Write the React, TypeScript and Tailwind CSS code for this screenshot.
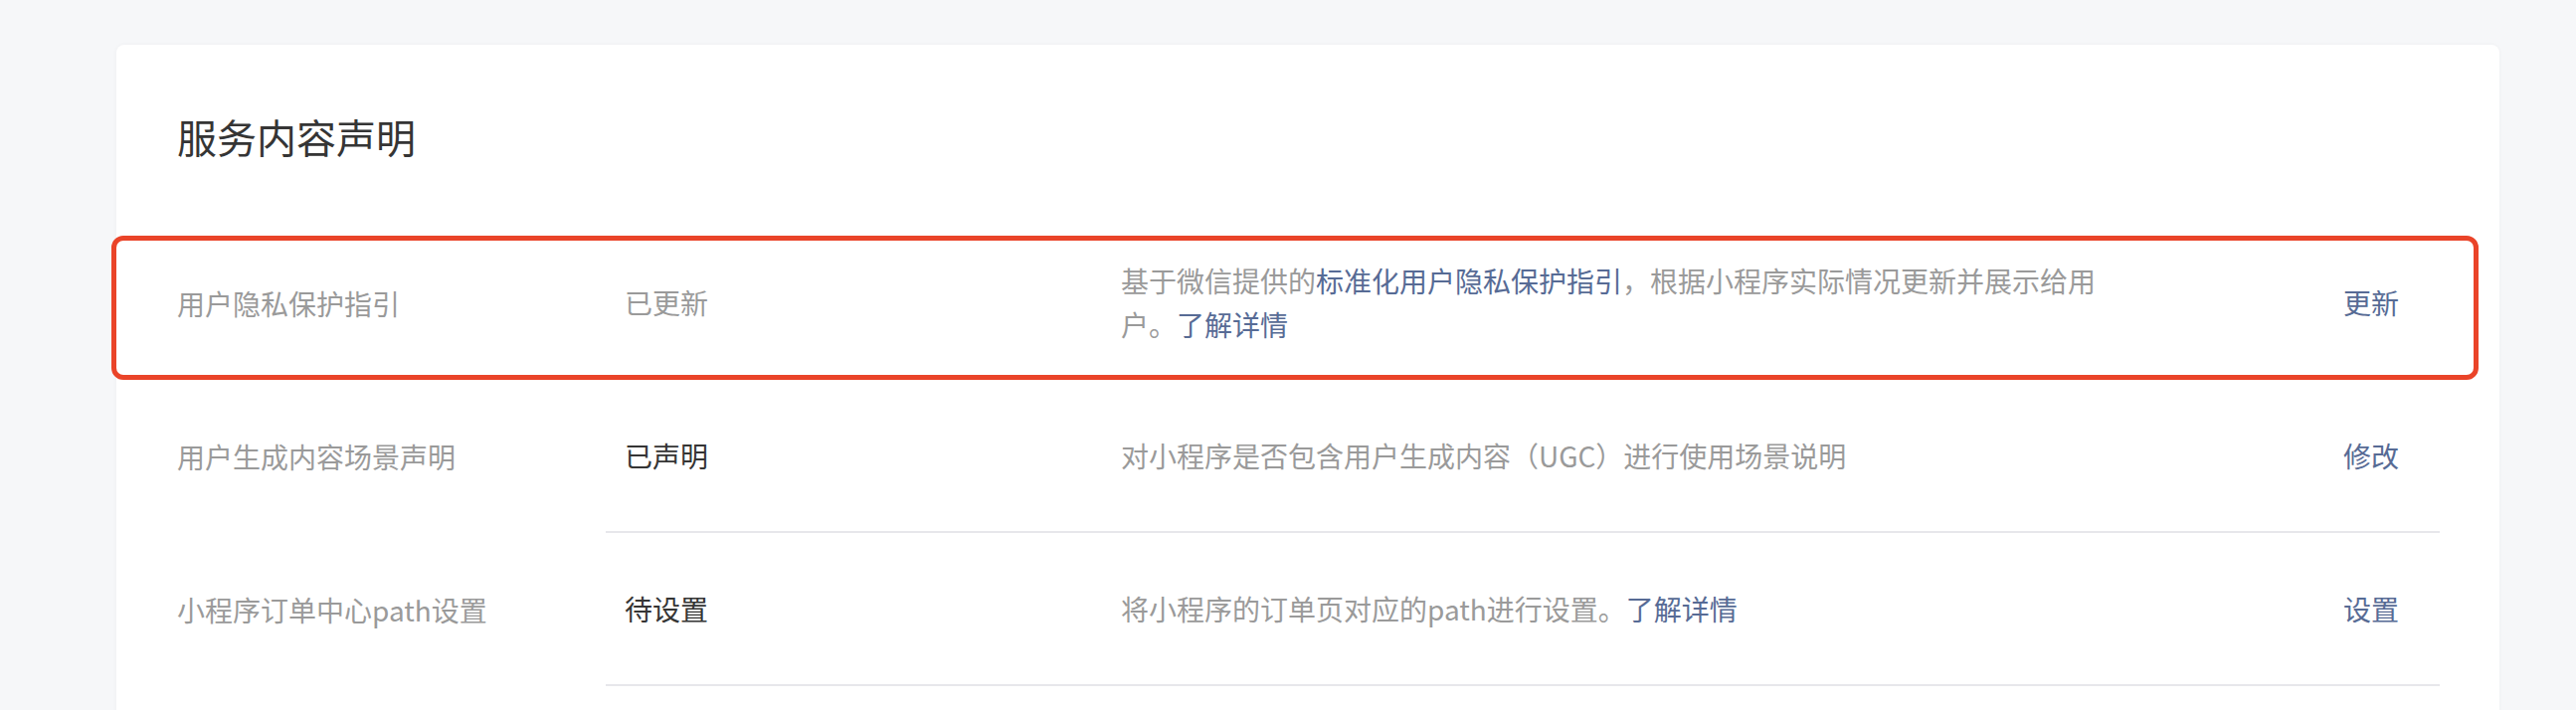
import React from "react";

type Row = {
  label: string;
  status: string;
  statusDone?: boolean;
  desc: React.ReactNode;
  action: string;
  highlight?: boolean;
};

const Link = ({ children }: { children: React.ReactNode }) => (
  <a className="text-[#576b95] cursor-pointer">{children}</a>
);

const rows: Row[] = [
  {
    label: "用户隐私保护指引",
    status: "已更新",
    statusDone: true,
    desc: (
      <>
        基于微信提供的<Link>标准化用户隐私保护指引</Link>，根据小程序实际情况更新并展示给用户。
        <Link>了解详情</Link>
      </>
    ),
    action: "更新",
    highlight: true,
  },
  {
    label: "用户生成内容场景声明",
    status: "已声明",
    desc: "对小程序是否包含用户生成内容（UGC）进行使用场景说明",
    action: "修改",
  },
  {
    label: "小程序订单中心path设置",
    status: "待设置",
    desc: (
      <>
        将小程序的订单页对应的path进行设置。<Link>了解详情</Link>
      </>
    ),
    action: "设置",
  },
];

function DeclRow({ row }: { row: Row }) {
  return (
    <div className="relative flex h-[154px]">
      {/* label column sits outside the divider */}
      <div className="w-[431px] shrink-0 flex items-center text-[#9a9a9a]">
        {row.label}
      </div>
      <div className="flex-1 flex items-center border-b-2 border-[#e7e7eb] pl-[19px]">
        <div
          className={
            row.statusDone
              ? "w-[499px] shrink-0 text-[#9a9a9a]"
              : "w-[499px] shrink-0 text-[#353535]"
          }
        >
          {row.status}
        </div>
        <div className="w-[1000px] shrink-0 text-[#9a9a9a] leading-[44px]">
          {row.desc}
        </div>
        <div className="flex-1 text-right pr-[41px]">
          <Link>{row.action}</Link>
        </div>
      </div>
      {row.highlight && (
        <div className="pointer-events-none absolute left-[-66px] right-[-39px] top-[9px] bottom-0 rounded-[12px] border-[5px] border-[#ea4429]" />
      )}
    </div>
  );
}

export default function App() {
  return (
    <div
      className="min-h-screen bg-[#f6f7f9] pt-[45px] pl-[117px] pr-[77px]"
      style={{ fontFamily: '"Noto Sans CJK SC", "Noto Sans", sans-serif' }}
    >
      <div className="bg-white rounded-[8px] shadow-[0_0_4px_rgba(0,0,0,0.04)] pt-[64px] pl-[61px] pr-[60px] pb-[40px]">
        <h1 className="text-[40px] leading-[56px] text-[#353535] font-normal mb-[63px]">
          服务内容声明
        </h1>
        <div className="text-[28px] leading-[40px]">
          {rows.map((r) => (
            <DeclRow key={r.label} row={r} />
          ))}
        </div>
      </div>
    </div>
  );
}
